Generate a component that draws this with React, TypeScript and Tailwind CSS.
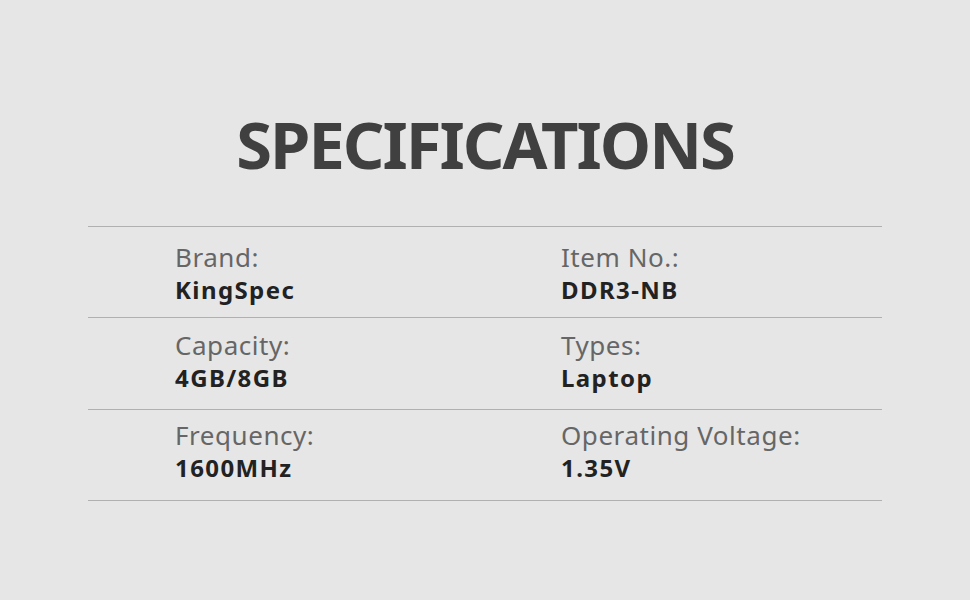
const specs = [
  {
    pad: "pt-[14px] h-[91px]",
    cells: [
      { label: "Brand:", value: "KingSpec" },
      { label: "Item No.:", value: "DDR3-NB" },
    ],
  },
  {
    pad: "pt-[11px] h-[92px]",
    cells: [
      { label: "Capacity:", value: "4GB/8GB" },
      { label: "Types:", value: "Laptop" },
    ],
  },
  {
    pad: "pt-[9px] h-[91px]",
    cells: [
      { label: "Frequency:", value: "1600MHz" },
      { label: "Operating Voltage:", value: "1.35V" },
    ],
  },
];

export default function App() {
  return (
    <div
      className="w-[970px] h-[600px] bg-[#e6e6e6] flex flex-col items-center"
      style={{ fontFamily: '"Noto Sans", "Open Sans", sans-serif' }}
    >
      <h1 className="mt-[102px] h-[84px] text-[65px] leading-[84px] font-bold text-[#404040] tracking-[-2px]">
        SPECIFICATIONS
      </h1>
      <div className="mt-[40px] w-[794px] border-t border-[#b0b0b0]">
        {specs.map((row, i) => (
          <div key={i} className={`${row.pad} border-b border-[#b0b0b0] flex pl-[87px]`}>
            {row.cells.map((s) => (
              <div key={s.label} className="w-[386px] shrink-0 flex flex-col">
                <span className="text-[26px] leading-[32px] text-[#666666] tracking-[0.55px]">{s.label}</span>
                <span className="text-[24px] leading-[34px] font-bold text-[#222222] tracking-[1.4px]">{s.value}</span>
              </div>
            ))}
          </div>
        ))}
      </div>
    </div>
  );
}
